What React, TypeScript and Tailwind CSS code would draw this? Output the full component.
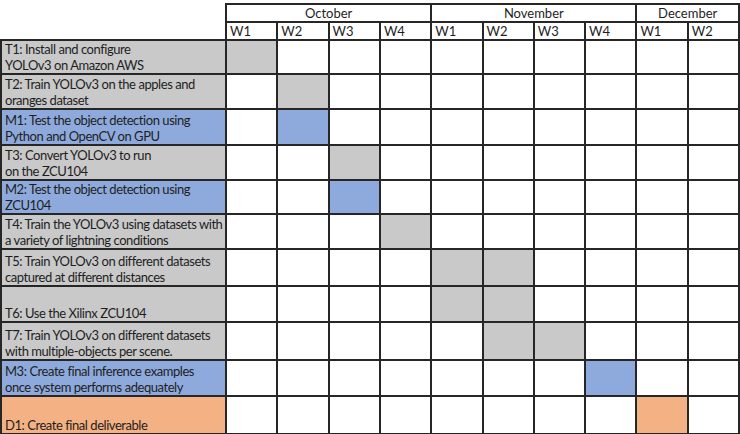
import React from "react";

type Fill = "gray" | "blue" | "orange";

const months = [
  { name: "October", span: 4 },
  { name: "November", span: 4 },
  { name: "December", span: 2 },
];

const weeks = ["W1", "W2", "W3", "W4", "W1", "W2", "W3", "W4", "W1", "W2"];

const rows: { label: string[]; fill: Fill; cells: number[]; h: string }[] = [
  { label: ["T1: Install and configure", "YOLOv3 on Amazon AWS"], fill: "gray", cells: [0], h: "h-[34px]" },
  { label: ["T2: Train YOLOv3 on the apples and", "oranges dataset"], fill: "gray", cells: [1], h: "h-[35px]" },
  { label: ["M1: Test the object detection using", "Python and OpenCV on GPU"], fill: "blue", cells: [1], h: "h-[36px]" },
  { label: ["T3: Convert YOLOv3 to run", "on the ZCU104"], fill: "gray", cells: [2], h: "h-[35px]" },
  { label: ["M2: Test the object detection using", "ZCU104"], fill: "blue", cells: [2], h: "h-[34px]" },
  { label: ["T4: Train the YOLOv3 using datasets with", "a variety of lightning conditions"], fill: "gray", cells: [3], h: "h-[35px]" },
  { label: ["T5: Train YOLOv3 on different datasets", "captured at different distances"], fill: "gray", cells: [4, 5], h: "h-[37px]" },
  { label: ["T6: Use the Xilinx ZCU104"], fill: "gray", cells: [4, 5], h: "h-[36px]" },
  { label: ["T7: Train YOLOv3 on different datasets", "with multiple-objects per scene."], fill: "gray", cells: [5, 6], h: "h-[38px]" },
  { label: ["M3: Create final inference examples", "once system performs adequately"], fill: "blue", cells: [7], h: "h-[36px]" },
  { label: ["D1: Create final deliverable"], fill: "orange", cells: [8], h: "h-[38px]" },
];

const fillClass: Record<Fill, string> = {
  gray: "bg-[#c9c9c9]",
  blue: "bg-[#8eaadc]",
  orange: "bg-[#f4b183]",
};

export default function App() {
  return (
    <div
      className="h-[434px] w-[740px] bg-white pt-[3px] text-[#1e1e1e]"
      style={{ fontFamily: "Lato, 'Open Sans', sans-serif" }}
    >
      <table className="w-[738px] table-fixed border-collapse text-[13px] leading-[16px]">
        <colgroup>
          <col className="w-[225px]" />
          {weeks.map((_, i) => (
            <col key={i} className="w-[51.3px]" />
          ))}
        </colgroup>
        <thead>
          <tr className="h-[17px]">
            <th className="p-0" />
            {months.map((m) => (
              <th
                key={m.name}
                colSpan={m.span}
                className="border-2 border-[#262626] p-0 text-center font-normal"
              >
                {m.name}
              </th>
            ))}
          </tr>
          <tr className="h-[17px]">
            <th className="p-0" />
            {weeks.map((w, i) => (
              <th
                key={i}
                className="border-2 border-[#262626] px-[3px] py-0 text-left font-normal"
              >
                {w}
              </th>
            ))}
          </tr>
        </thead>
        <tbody>
          {rows.map((r, ri) => (
            <tr key={ri} className={r.h}>
              <td
                className={`overflow-hidden border-2 border-[#262626] px-[3px] pb-0 pt-0 align-bottom whitespace-nowrap tracking-[-0.45px] ${fillClass[r.fill]}`}
              >
                {r.label.map((l, li) => (
                  <div key={li}>{l}</div>
                ))}
              </td>
              {weeks.map((_, ci) => (
                <td
                  key={ci}
                  className={`border-2 border-[#262626] p-0 ${r.cells.includes(ci) ? fillClass[r.fill] : "bg-white"}`}
                />
              ))}
            </tr>
          ))}
        </tbody>
      </table>
    </div>
  );
}
